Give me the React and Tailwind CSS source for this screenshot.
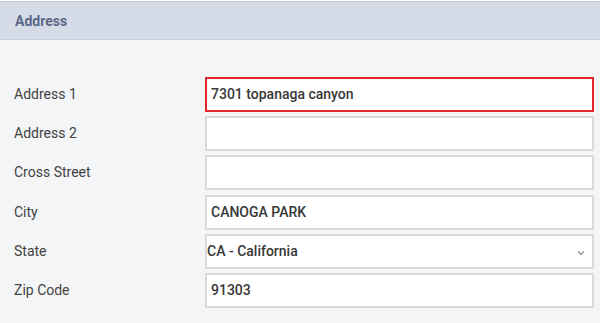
import React from "react";

const fields = [
  { label: "Address 1", value: "7301 topanaga canyon", error: true },
  { label: "Address 2", value: "" },
  { label: "Cross Street", value: "" },
  { label: "City", value: "CANOGA PARK" },
  { label: "State", value: "CA - California", select: true },
  { label: "Zip Code", value: "91303" },
];

function Field({ field }) {
  let box = "border-2 border-[#dadada]";
  if (field.error) box = "border-2 border-[#e3262a]";

  return (
    <div className="flex items-center">
      <label className="w-[205px] pl-[14px] text-[14px] text-[#434343]">{field.label}</label>
      <div className={`relative flex h-[35px] w-[389px] items-center bg-white ${box}`}>
        {field.select ? (
          <>
            <span className="text-[14px] font-medium text-[#383838]">{field.value}</span>
            <svg className="absolute right-[7px] top-[14px]" width="8" height="6" viewBox="0 0 8 6">
              <path d="M1 1.5 L4 4.5 L7 1.5" fill="none" stroke="#8a8a8a" strokeWidth="1.2" />
            </svg>
          </>
        ) : (
          <span className="pl-[4px] text-[14px] font-medium text-[#383838]">{field.value}</span>
        )}
      </div>
    </div>
  );
}

export default function App() {
  return (
    <div className="h-[323px] w-[600px] bg-[#f4f5f7] font-['Roboto',sans-serif]">
      <div className="mt-[1px] flex h-[39px] items-center border-y border-[#c6cdd9] bg-[#d6dce7] pl-[15px] pt-[2px]">
        <h2 className="text-[14px] font-bold text-[#5b6887]">Address</h2>
      </div>
      <div className="flex flex-col gap-[4.2px] pt-[37px]">
        {fields.map((f) => (
          <Field key={f.label} field={f} />
        ))}
      </div>
    </div>
  );
}
